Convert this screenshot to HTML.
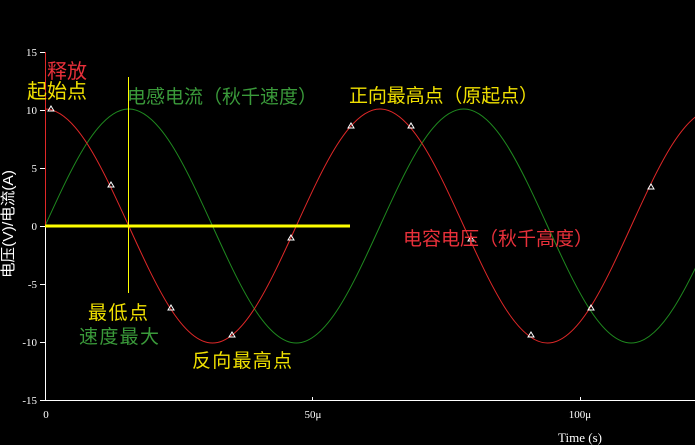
<!DOCTYPE html>
<html><head><meta charset="utf-8"><style>
html,body{margin:0;padding:0;background:#000;width:695px;height:445px;overflow:hidden}
svg{display:block}
.t{font-family:"Liberation Sans","Noto Sans CJK SC",sans-serif;font-size:19px}
.a{font-family:"Liberation Serif",serif;font-size:11px;fill:#fff}
</style></head><body>
<svg width="695" height="445" viewBox="0 0 695 445" xmlns="http://www.w3.org/2000/svg">
<rect width="695" height="445" fill="#000"/>
<defs><clipPath id="c"><rect x="45" y="40" width="650" height="361"/></clipPath></defs>
<g clip-path="url(#c)" fill="none" stroke-width="1">
<path stroke="#1f8a1f" d="M45,226 C72.3,166.1 98.4,109 128.75,109 C159.1,109 185.2,166.1 212.5,226 C239.8,285.9 265.9,343 296.25,343 C326.6,343 352.7,285.9 380,226 C407.3,166.1 433.4,109 463.75,109 C494.1,109 520.2,166.1 547.5,226 C574.8,285.9 600.9,343 631.25,343 C661.6,343 687.7,285.9 715,226"/>
<path stroke="#e02828" d="M45,109 C75.35,109 101.45,166.1 128.75,226 C156.05,285.9 182.15,343 212.5,343 C242.85,343 268.95,285.9 296.25,226 C323.55,166.1 349.65,109 380,109 C410.35,109 436.45,166.1 463.75,226 C491.05,285.9 517.15,343 547.5,343 C577.85,343 603.95,285.9 631.25,226 C658.55,166.1 684.65,109 715,109"/>
</g>
<line x1="45.5" y1="52" x2="45.5" y2="226" stroke="#e02828"/>
<line x1="45.5" y1="226" x2="45.5" y2="400.5" stroke="#fff"/>
<line x1="45" y1="400.5" x2="695" y2="400.5" stroke="#fff"/>
<g stroke="#fff">
<line x1="40" y1="52.5" x2="45" y2="52.5"/><line x1="40" y1="110.5" x2="45" y2="110.5"/>
<line x1="40" y1="168.5" x2="45" y2="168.5"/><line x1="40" y1="226.5" x2="45" y2="226.5"/>
<line x1="40" y1="284.5" x2="45" y2="284.5"/><line x1="40" y1="342.5" x2="45" y2="342.5"/>
<line x1="40" y1="400.5" x2="45" y2="400.5"/>
<line x1="312.5" y1="397" x2="312.5" y2="401"/><line x1="580.5" y1="397" x2="580.5" y2="401"/>
</g>
<g class="a" text-anchor="end">
<text x="37" y="56">15</text><text x="37" y="114">10</text><text x="37" y="172">5</text>
<text x="37" y="230">0</text><text x="37" y="288">-5</text><text x="37" y="346">-10</text><text x="37" y="404">-15</text>
</g>
<g class="a" text-anchor="middle">
<text x="46" y="418">0</text><text x="313" y="418">50μ</text><text x="580" y="418">100μ</text>
<text x="580" y="442" font-size="13">Time (s)</text>
</g>
<text transform="translate(13,224) rotate(-90)" text-anchor="middle" font-family="Liberation Sans,Noto Sans CJK SC,sans-serif" font-size="15" fill="#fff" textLength="108" lengthAdjust="spacingAndGlyphs">电压(V)/电流(A)</text>
<line x1="45" y1="226" x2="350" y2="226" stroke="#ffff00" stroke-width="3"/>
<line x1="128.5" y1="77" x2="128.5" y2="293" stroke="#ffff00" stroke-width="1"/>
<g fill="none" stroke="#fff" stroke-width="1">
<path d="M51,106 l3,5 h-6 z"/><path d="M111,182 l3,5 h-6 z"/><path d="M171,305 l3,5 h-6 z"/>
<path d="M232,332 l3,5 h-6 z"/><path d="M291,235 l3,5 h-6 z"/><path d="M351,123 l3,5 h-6 z"/>
<path d="M411,123 l3,5 h-6 z"/><path d="M471,236 l3,5 h-6 z"/><path d="M531,332 l3,5 h-6 z"/>
<path d="M591,305 l3,5 h-6 z"/><path d="M651,184 l3,5 h-6 z"/>
</g>
<g class="t" lengthAdjust="spacingAndGlyphs">
<text x="47" y="78" fill="#e8303a" font-size="20" textLength="40">释放</text>
<text x="27" y="98" fill="#f0e000" font-size="20" textLength="60">起始点</text>
<text x="127" y="103" fill="#3a9a3a" font-size="19" textLength="190">电感电流（秋千速度）</text>
<text x="349" y="102" fill="#f0e000" font-size="19" textLength="189">正向最高点（原起点）</text>
<text x="403" y="245" fill="#e8303a" font-size="19" textLength="190">电容电压（秋千高度）</text>
<text x="88" y="319" fill="#f0e000" font-size="19" textLength="60">最低点</text>
<text x="79" y="343" fill="#3a9a3a" font-size="19" textLength="80">速度最大</text>
<text x="192" y="367" fill="#f0e000" font-size="19" textLength="100">反向最高点</text>
</g>
</svg>
</body></html>
